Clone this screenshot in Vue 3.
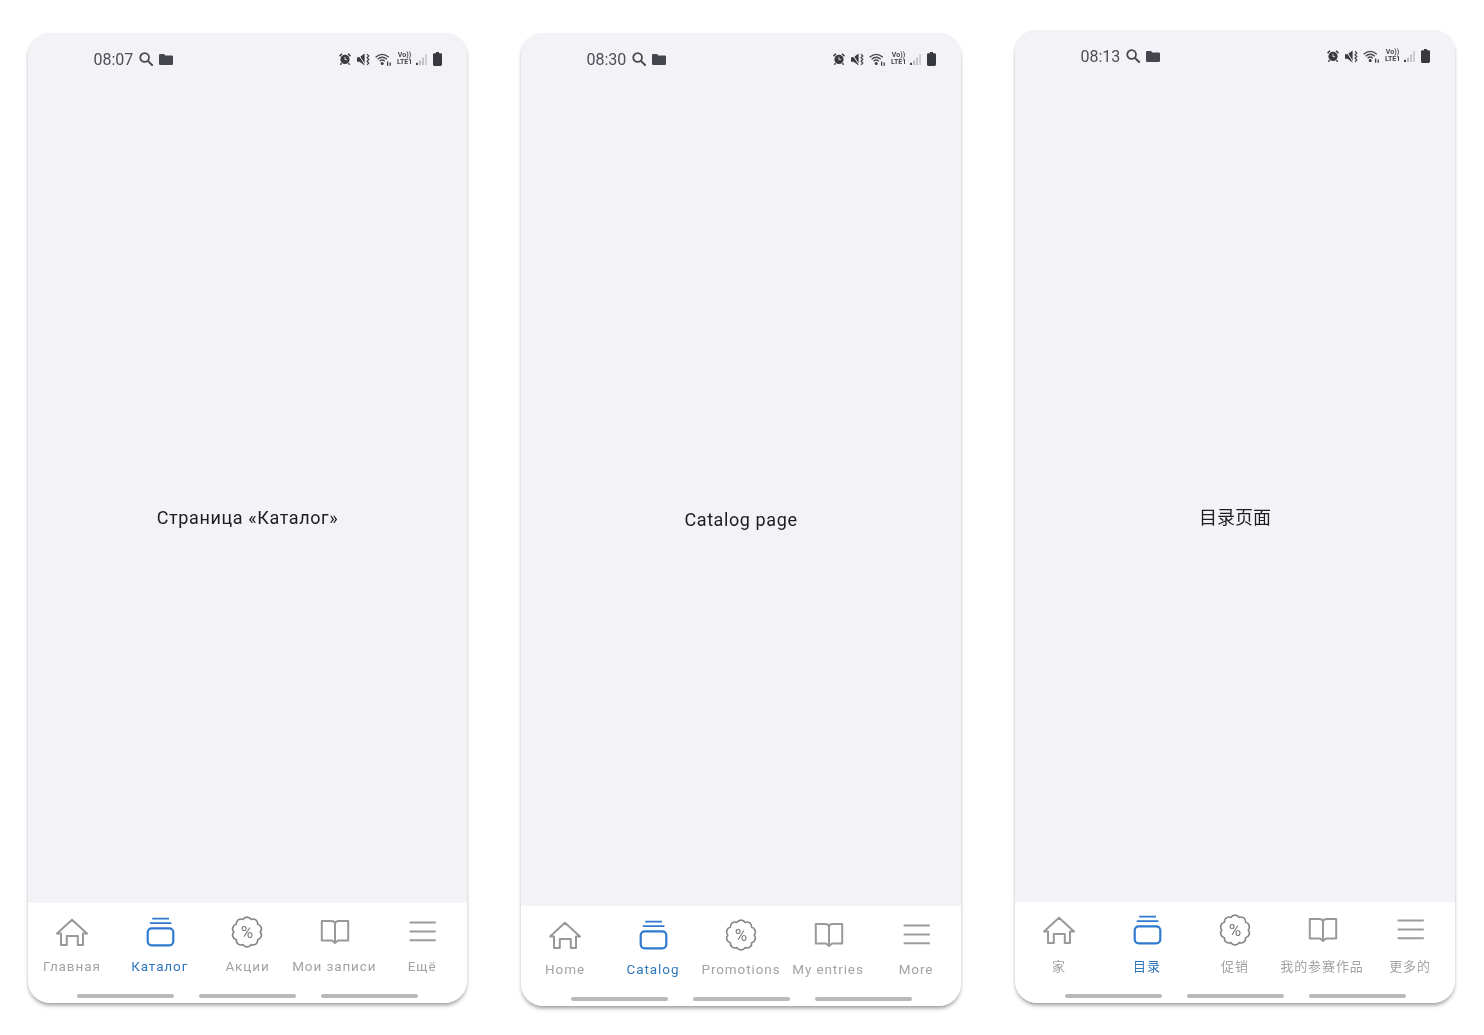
<script setup>
const badge = (() => {
  const n = 10
  const pts = []
  for (let i = 0; i < n; i++) {
    const a = (i / n) * Math.PI * 2 - Math.PI / 2 + Math.PI / n
    pts.push([16 + 13.2 * Math.cos(a), 16 + 13.2 * Math.sin(a)])
  }
  let d = "M" + pts[0][0].toFixed(2) + " " + pts[0][1].toFixed(2)
  for (let i = 1; i <= n; i++) {
    const p = pts[i % n]
    d += " A4.7 4.7 0 0 1 " + p[0].toFixed(2) + " " + p[1].toFixed(2)
  }
  return d + " Z"
})()

const icons = ["home", "catalog", "promo", "book", "menu"]

const phones = [
  { id: "ru", time: "08:07", title: "Страница «Каталог»", labels: ["Главная", "Каталог", "Акции", "Мои записи", "Ещё"] },
  { id: "en", time: "08:30", title: "Catalog page", labels: ["Home", "Catalog", "Promotions", "My entries", "More"] },
  { id: "zh", time: "08:13", title: "目录页面", labels: ["家", "目录", "促销", "我的参赛作品", "更多的"] }
]
</script>

<template>
  <div class="page">
    <section v-for="phone in phones" :key="phone.id" class="phone" :class="phone.id">
      <div class="status">
        <span class="time">{{ phone.time }}</span>
        <svg class="search" width="14" height="14" viewBox="0 0 15 15">
          <circle cx="6" cy="6" r="4.7" fill="none" stroke="#4a4a52" stroke-width="1.9" />
          <path d="M9.5 9.5L14 14" stroke="#4a4a52" stroke-width="2.2" stroke-linecap="round" />
        </svg>
        <svg class="folder" width="14" height="11" viewBox="0 0 14 11">
          <path d="M0 1.2Q0 0 1.2 0H5L6.4 1.6H12.8Q14 1.6 14 2.8V9.8Q14 11 12.8 11H1.2Q0 11 0 9.8Z" fill="#45454d" />
        </svg>
        <div class="status-right">
          <svg class="alarm" width="12" height="12" viewBox="0 0 13 13">
            <circle cx="6.5" cy="7" r="5" fill="#3a3a41" />
            <path d="M0.6 3.4L3.2 0.8M12.4 3.4L9.8 0.8M2.8 11L1.4 12.6M10.2 11L11.6 12.6" stroke="#3a3a41" stroke-width="1.6" />
            <path d="M6.5 4.2V7.2H8.8" fill="none" stroke="#f2f2f7" stroke-width="0.9" />
          </svg>
          <svg width="13" height="13" viewBox="0 0 13 13">
            <path d="M0 4.2H2.6L7.6 0.6V12.4L2.6 8.8H0Z" fill="#3a3a41" />
            <path d="M1 0.6L8 11.8" stroke="#f2f2f7" stroke-width="1" />
            <path d="M10 1.2L11.8 3L10 4.8L11.8 6.5L10 8.2L11.8 10L10 11.8" fill="none" stroke="#45454d" stroke-width="1.2" />
          </svg>
          <svg width="17" height="13" viewBox="0 0 17 13">
            <path d="M0.6 4.2Q7.2 -1.4 13.8 4.2M2.6 6.2Q7.2 2.2 11.8 6.2M4.6 8.2Q7.2 5.8 9.8 8.2" fill="none" stroke="#4a4a52" stroke-width="1.3" />
            <circle cx="7.2" cy="10.6" r="1.5" fill="#3a3a41" />
            <path d="M12.6 12.8V8.6M15.2 12.8V9.4" stroke="#3a3a41" stroke-width="1.3" />
          </svg>
          <span class="volte">Vo))<br />LTE1</span>
          <svg width="12" height="13" viewBox="0 0 12 13">
            <rect x="0" y="9.8" width="2" height="2.2" fill="#45454d" />
            <rect x="3.4" y="7.5" width="1.3" height="4.5" fill="#a0a0a6" />
            <rect x="6.4" y="4.5" width="1.3" height="7.5" fill="#acacb2" />
            <rect x="9.4" y="1" width="1.3" height="11" fill="#bcbcc0" />
          </svg>
          <svg width="9" height="14" viewBox="0 0 9 14">
            <path d="M3 0H6V1.2H7.6Q9 1.2 9 2.6V12.6Q9 14 7.6 14H1.4Q0 14 0 12.6V2.6Q0 1.2 1.4 1.2H3Z" fill="#38383f" />
          </svg>
        </div>
      </div>

      <main class="content">
        <p class="title">{{ phone.title }}</p>
      </main>

      <nav class="nav">
        <div class="tabs">
          <div v-for="(icon, i) in icons" :key="icon" class="tab" :class="{ active: icon === 'catalog' }">
            <svg class="tab-icon" width="32" height="32" viewBox="0 0 32 32" fill="none">
              <template v-if="icon === 'home'">
                <path d="M1 17.5L16 3.8L31 17.5H27V29H21.8V20H10.8V29H5V17.5Z" stroke="#999" stroke-width="2" stroke-linejoin="round" />
              </template>
              <template v-else-if="icon === 'catalog'">
                <rect x="3.7" y="12.3" width="25.6" height="17" rx="4" stroke="#2f79cf" stroke-width="2.2" />
                <path d="M8.2 2.6H25" stroke="#2f79cf" stroke-width="1.7" />
                <path d="M5.8 7.2H27.4" stroke="#2f79cf" stroke-width="1.7" />
              </template>
              <template v-else-if="icon === 'promo'">
                <path :d="badge" stroke="#868686" stroke-width="1.7" stroke-linejoin="round" />
                <text x="16" y="21.6" text-anchor="middle" class="percent">%</text>
              </template>
              <template v-else-if="icon === 'book'">
                <path d="M2.8 5H12Q16 5 16 8.2Q16 5 20 5H29.2V24.5H19L16 27L13 24.5H2.8ZM16 8.2V27" stroke="#999" stroke-width="2" stroke-linejoin="round" />
              </template>
              <template v-else>
                <path d="M2.6 6.4H28.8M2.6 15.6H28.8M2.6 24.3H28.8" stroke="#9c9c9c" stroke-width="2" />
              </template>
            </svg>
            <span class="label">{{ phone.labels[i] }}</span>
          </div>
        </div>
        <div class="indicators">
          <span class="indicator"></span>
          <span class="indicator"></span>
          <span class="indicator"></span>
        </div>
      </nav>
    </section>
  </div>
</template>

<style scoped>
.page {
  display: flex;
  align-items: flex-start;
  gap: 54px;
  padding-left: 28px;
  width: 1484px;
  height: 1035px;
  box-sizing: border-box;
  background: #fff;
  font-family: Roboto, "Noto Sans CJK SC", sans-serif;
  filter: blur(0.45px);
}
.phone {
  display: flex;
  flex-direction: column;
  width: 440px;
  height: 973px;
  margin-top: 33px;
  background: #f2f2f7;
  border-radius: 22px;
  overflow: hidden;
  box-shadow: 0 3px 4px -1px rgba(0, 0, 0, 0.42), 0 0 1px rgba(0, 0, 0, 0.05);
}
.phone.ru {
  width: 439px;
  height: 970px;
}
.phone.zh {
  margin-top: 30px;
}
.status {
  display: flex;
  align-items: center;
  height: 20px;
  margin-top: 16px;
  padding: 0 25px 0 65.5px;
}
.time {
  font-size: 16px;
  color: #4d4d55;
}
.search {
  margin-left: 5.5px;
}
.folder {
  margin-left: 6px;
}
.status-right {
  display: flex;
  align-items: center;
  gap: 5px;
  margin-left: auto;
}
.alarm {
  margin-right: 1px;
}
.volte {
  width: 15px;
  margin-right: -1px;
  font-size: 7px;
  line-height: 7px;
  font-weight: 700;
  color: #45454d;
  text-align: center;
}
.content {
  flex: 1;
  display: flex;
  align-items: center;
  justify-content: center;
  padding-top: 63px;
}
.title {
  margin: 0;
  font-size: 18px;
  letter-spacing: 0.6px;
  color: #1d1d20;
}
.zh .title {
  letter-spacing: 0;
}
.nav {
  background: #fff;
  padding: 13px 0 5px;
}
.zh .nav {
  padding-top: 12px;
}
.tabs {
  display: grid;
  grid-template-columns: repeat(5, 1fr);
}
.tab {
  display: flex;
  flex-direction: column;
  align-items: center;
  gap: 10px;
}
.zh .tab {
  gap: 13px;
}
.tab-icon {
  display: block;
}
.tab:nth-child(2) .tab-icon {
  margin-left: 0.5px;
}
.percent {
  font-family: Roboto, sans-serif;
  font-size: 17px;
  fill: #7c7c7c;
}
.label {
  font-size: 13.5px;
  line-height: 16px;
  letter-spacing: 0.9px;
  color: #a3a3a3;
  white-space: nowrap;
}
.zh .label {
  font-size: 13px;
}
.tab:nth-child(n+4) .label {
  margin-right: 2px;
}
.tab.active .label {
  color: #2f78bd;
}
.indicators {
  display: flex;
  justify-content: center;
  gap: 25px;
  margin-top: 20px;
}
.zh .indicators {
  margin-top: 19px;
}
.indicator {
  width: 97px;
  height: 4px;
  border-radius: 2px;
  background: #b9b9b9;
}
</style>
